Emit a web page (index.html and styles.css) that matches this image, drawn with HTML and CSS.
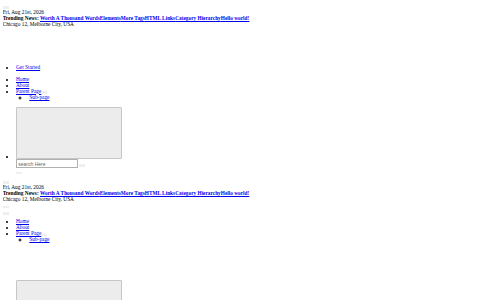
FILE: index.html
```html
<!DOCTYPE html>
<html lang="en">
<head>
    <meta charset="UTF-8">
    <meta name="viewport" content="width=device-width, initial-scale=1.0">
    <title>Hello world!</title>
    <link rel="stylesheet" href="styles.css">
</head>

<body>
    <div class="top-bar">
        <div><button class="toggle" type="button"></button></div>
        <div class="date">Fri, Aug 21st, 2026</div>
        <div class="trending"><strong>Trending News: <a href="#">Worth A Thousand Words</a><a href="#">Elements</a><a href="#">More Tags</a><a href="#">HTML Links</a><a href="#">Category Hierarchy</a><a href="#">Hello world!</a></strong></div>
        <div class="address">Chicago 12, Melborne City, USA</div>
    </div>

    <div class="logo-space"></div>

    <ul>
        <li><a href="#">Get Started</a></li>
    </ul>

    <ul class="menu">
        <li><a href="#">Home</a></li>
        <li><a href="#">About</a></li>
        <li><a href="#">Parent Page</a><button class="sub-toggle" type="button"></button>
            <ul>
                <li><a href="#">Sub-page</a></li>
            </ul>
        </li>
        <li>
            <div class="ad-box"></div>
            <form class="search">
                <input type="text" placeholder="search Here"><button type="button"></button>
            </form>
            <button class="close" type="button"></button>
        </li>
    </ul>

    <div class="top-bar sticky">
        <div><button class="toggle" type="button"></button></div>
        <div class="date">Fri, Aug 21st, 2026</div>
        <div class="trending"><strong>Trending News: <a href="#">Worth A Thousand Words</a><a href="#">Elements</a><a href="#">More Tags</a><a href="#">HTML Links</a><a href="#">Category Hierarchy</a><a href="#">Hello world!</a></strong></div>
        <div class="address">Chicago 12, Melborne City, USA</div>
        <div><button class="toggle" type="button"></button></div>
        <div><button class="toggle" type="button"></button></div>
    </div>

    <ul class="menu second-menu">
        <li><a href="#">Home</a></li>
        <li><a href="#">About</a></li>
        <li><a href="#">Parent Page</a><button class="sub-toggle" type="button"></button>
            <ul>
                <li><a href="#">Sub-page</a></li>
            </ul>
        </li>
        <li>
            <div class="ad-box second"></div>
        </li>
    </ul>
</body>
</html>
```

FILE: styles.css
```css
html {
    zoom: 0.3333;
}

body {
    font-family: "Liberation Serif", "Times New Roman", serif;
    font-size: 16px;
    line-height: 18px;
    overflow: hidden;
}

.logo-space {
    height: 96px;
}

.sticky {
    margin-top: -6px;
}

.second-menu {
    margin-top: 10px;
}

.ad-box {
    display: inline-block;
    width: 311px;
    height: 152px;
    margin-top: 20px;
    background-color: #ececec;
    border: 2px solid #c6c6c6;
    border-radius: 3px;
    vertical-align: bottom;
}

.ad-box.second {
    margin-top: 113px;
}

.search {
    display: block;
}

.search input {
    width: 171px;
    padding: 1px 4px;
    font-size: 15px;
    border: 2px solid #b0b0b0;
}

.search input::placeholder {
    color: #666;
}

.search button {
    margin-left: 4px;
}
```
